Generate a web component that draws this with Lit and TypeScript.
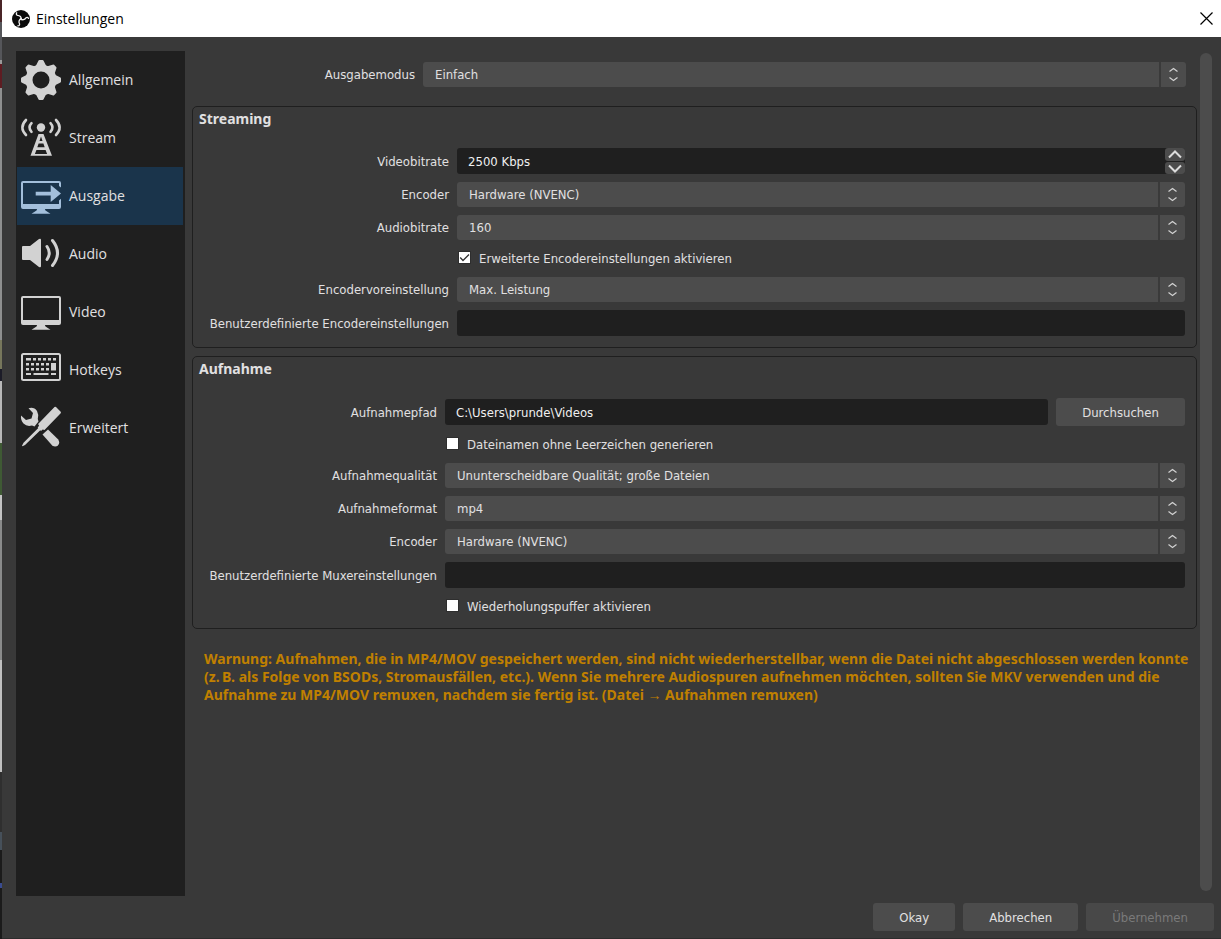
import { LitElement, html, css, svg, nothing } from "lit";
import { customElement, property, state } from "lit/decorators.js";
import { classMap } from "lit/directives/class-map.js";

const formText = css`
  font-family: "DejaVu Sans Condensed", "Noto Sans", sans-serif;
  font-size: 13px;
  line-height: 17px;
`;

const teeth = [0, 45, 90, 135, 180, 225, 270, 315];

const monitorStand = svg`<path d="M16.5 32h7l1 2.5 5 3.2h-19l5-3.2z" fill="currentColor"/>`;

const icons: Record<string, unknown> = {
  gear: svg`
    <circle cx="20" cy="20" r="12" fill="none" stroke="currentColor" stroke-width="7"/>
    ${teeth.map(
      (a) => svg`<path d="M14.5 6.5L17.3 1Q17.6 0 18.5 0h3Q22.4 0 22.7 1l2.8 5.5z"
        fill="currentColor" transform="rotate(${a} 20 20)"/>`
    )}`,
  antenna: svg`
    <g fill="none" stroke="currentColor" stroke-width="2.6" stroke-linecap="round">
      <path d="M5 2Q-2.200 9.500 5 17M35 2q7.200 7.500 0 15"/>
      <path d="M10.500 5.200q-4 4.300 0 8.600M29.500 5.200q4 4.300 0 8.600"/>
    </g>
    <circle cx="20" cy="9.500" r="4.200" fill="currentColor"/>
    <path fill="currentColor" fill-rule="evenodd"
      d="M17.500 16h5l8.500 21.700H9.500zM20 18.500l-1.500 4.500h3zM17.600 25.500l-1.300 3.700h7.400l-1.300-3.700zM15.400 32l-1.500 4h12.200l-1.500-4z"/>`,
  output: svg`
    <path fill="currentColor" fill-rule="evenodd"
      d="M2 5h36q2 0 2 2v4.500l-2-1.500V7H2v21h36v-3.500l2-1.700V31q0 2-2 2H2q-2 0-2-2V7q0-2 2-2z"/>
    ${monitorStand}
    <path fill="currentColor" d="M14.700 15.700h15V9L40 17.500 29.700 26v-6.500h-15z"/>`,
  speaker: svg`
    <path fill="currentColor" d="M2 12h7l9-7q2-1 2 1v26q0 2-2 1l-9-7H2q-1 0-1-1V13q0-1 1-1z"/>
    <g fill="none" stroke="currentColor" stroke-width="3" stroke-linecap="round">
      <path d="M26 12.500q4.500 6.500 0 13"/>
      <path d="M31.500 6.500q10 12.500 0 25"/>
    </g>`,
  monitor: svg`
    <path fill="currentColor" fill-rule="evenodd"
      d="M2 4h36q2 0 2 2v25q0 2-2 2H2q-2 0-2-2V6q0-2 2-2zM2 6v22h36V6z"/>
    ${monitorStand}`,
  keyboard: svg`
    <rect x="1" y="4" width="38" height="26" rx="1.500" fill="none" stroke="currentColor" stroke-width="2"/>
    <g fill="currentColor">
      <path d="M5 8h5v2.500H5zM12 8h3v2.500h-3zM17 8h3v2.500h-3zM22 8h3v2.500h-3zM27 8h3v2.500h-3zM32 8h3v2.500h-3z"/>
      <path d="M5 13h3v2.600H5zM10 13h3v2.600h-3zM15 13h3v2.600h-3zM20 13h3v2.600h-3zM25 13h3v2.600h-3z"/>
      <path d="M5 18h3v2.600H5zM10 18h3v2.600h-3zM15 18h3v2.600h-3zM20 18h3v2.600h-3zM25 18h3v2.600h-3z"/>
      <path d="M30 13h5v7.600h-5zM5 23h5v2H5zM12.500 23h15v2h-15zM30 23h5v2h-5z"/>
    </g>`,
  tools: svg`
    <g fill="currentColor">
      <path d="M33.500-1Q34.300-1.500 35-1l4.700 4.700q.5.800 0 1.500L23.500 22l-1.800-.5-1.700 1.500-.7-.7L4 37l-2.500 1.300-.5-.5 1.500-3L17.300 20.100l-.7-.7 1.500-1.700-1-1.600z"/>
      <path d="M0 7.500l5 4.500 5.500-1.500L12 5 7.500.2Q13-1.500 16 3q2 3.500.8 8L17.500 13.500l-4 5-2.500-1Q6 19 2.500 15.500-.5 12 0 7.500z"/>
      <path d="M27 21.500l10 9.800q2.500 3.500 0 6t-6 0L21.500 26.500z"/>
    </g>`,
};

/** Rows line up on one label column and one control column. */
const rowStyles = css`
  .row {
    display: grid;
    grid-template-columns: var(--label-width) minmax(0, 1fr);
    column-gap: 8px;
    align-items: center;
  }
  .row > label:first-child {
    text-align: right;
    white-space: nowrap;
  }
`;

@customElement("nav-icon")
class NavIcon extends LitElement {
  static styles = css`
    :host { display: block; width: 40px; height: 40px; }
    svg { display: block; overflow: visible; }
  `;
  @property() name = "gear";
  render() {
    return html`<svg width="40" height="40" viewBox="0 0 40 40" aria-hidden="true">${icons[this.name]}</svg>`;
  }
}

@customElement("select-row")
class SelectRow extends LitElement {
  static styles = [
    rowStyles,
    css`
      :host { display: block; }
      .box { display: grid; }
      .box > * { grid-area: 1 / 1; }
      select {
        appearance: none;
        box-sizing: border-box;
        width: 100%;
        height: 25px;
        margin: 0;
        border: 0;
        border-radius: 3px;
        padding: 0 30px 0 12px;
        background: #4c4c4c;
        color: #e1e0e1;
        ${formText}
      }
      .steps {
        justify-self: end;
        display: grid;
        place-items: center;
        width: 25px;
        height: 25px;
        border-left: 2px solid #3a3a3a;
        pointer-events: none;
      }
    `,
  ];
  @property() label = "";
  @property() value = "";
  render() {
    return html`<div class="row">
      <label for="field">${this.label}</label>
      <div class="box">
        <select id="field"><option>${this.value}</option></select>
        <span class="steps">
          <svg width="9" height="15" viewBox="0 0 9 15" fill="none" stroke="#d2d2d2" stroke-width="1.200" aria-hidden="true">
            <path d="M.5 4.500l4-3 4 3M.5 10.500l4 3 4-3"/>
          </svg>
        </span>
      </div>
    </div>`;
  }
}

@customElement("text-row")
class TextRow extends LitElement {
  static styles = [
    rowStyles,
    css`
      :host { display: block; }
      .line { display: flex; align-items: center; gap: 8px; }
      .field { flex: 1; display: flex; min-width: 0; border-radius: 3px; background: #1f1f1f; }
      input {
        flex: 1;
        min-width: 0;
        box-sizing: border-box;
        height: 26px;
        margin: 0;
        border: 0;
        padding: 0 11px;
        background: none;
        color: #f0f0f0;
        ${formText}
      }
      .spin { display: grid; grid-template-rows: 13px 12px; gap: 1px; width: 20px; }
      .spin button {
        display: grid;
        place-items: center;
        border: 0;
        border-radius: 3px;
        padding: 0;
        background: #4c4c4c;
      }
      .browse {
        width: 129px;
        height: 28px;
        border: 0;
        border-radius: 3px;
        padding: 0;
        background: #4c4c4c;
        color: #e1e0e1;
        ${formText}
      }
    `,
  ];
  @property() label = "";
  @property() value = "";
  @property() action = "";
  @property({ type: Boolean }) stepper = false;
  render() {
    const arrow = (name: string, d: string) => html`<button type="button" aria-label=${name}>
      <svg width="14" height="9" viewBox="0 0 14 9" fill="none" stroke="#dcdcdc" stroke-width="2" aria-hidden="true"><path d=${d}/></svg>
    </button>`;
    return html`<div class="row">
      <label for="field">${this.label}</label>
      <div class="line">
        <div class="field">
          <input id="field" type="text" .value=${this.value} />
          ${this.stepper
            ? html`<div class="spin">${arrow("Erhöhen", "M1 7.500l6-6 6 6")}${arrow("Verringern", "M1 1.500l6 6 6-6")}</div>`
            : nothing}
        </div>
        ${this.action ? html`<button class="browse" type="button">${this.action}</button>` : nothing}
      </div>
    </div>`;
  }
}

@customElement("check-row")
class CheckRow extends LitElement {
  static styles = [
    rowStyles,
    css`
      :host { display: block; }
      .check {
        grid-column: 2;
        display: flex;
        align-items: center;
        gap: 8px;
        height: 21px;
      }
      .mark { display: grid; margin: 0 0 2px 1px; }
      .mark > * { grid-area: 1 / 1; }
      input {
        appearance: none;
        box-sizing: border-box;
        width: 13px;
        height: 13px;
        margin: 0;
        border: 1px solid #2e2e2e;
        background: #fff;
      }
      svg { place-self: center; pointer-events: none; }
    `,
  ];
  @property() label = "";
  @property({ type: Boolean }) checked = false;
  render() {
    return html`<div class="row">
      <div class="check">
        <span class="mark">
          <input id="field" type="checkbox" .checked=${this.checked}
            @change=${(e: Event) => (this.checked = (e.target as HTMLInputElement).checked)} />
          ${this.checked
            ? html`<svg width="11" height="11" viewBox="0 0 11 11" fill="none" stroke="#333" stroke-width="1.300" aria-hidden="true"><path d="M1.200 5.500L4 8.500l6-6"/></svg>`
            : nothing}
        </span>
        <label for="field">${this.label}</label>
      </div>
    </div>`;
  }
}

const pages = [
  ["gear", "Allgemein"],
  ["antenna", "Stream"],
  ["output", "Ausgabe"],
  ["speaker", "Audio"],
  ["monitor", "Video"],
  ["keyboard", "Hotkeys"],
  ["tools", "Erweitert"],
];

@customElement("app-root")
class AppRoot extends LitElement {
  static styles = css`
    :host {
      display: grid;
      grid-template-columns: 2px minmax(0, 1fr);
      min-height: 100vh;
      color: #e1e0e1;
      ${formText}
    }
    .desktop {
      background: linear-gradient(
        #4a2528 0 22px, #55565a 22px 60px, #9a9a9a 60px 64px, #5e1c22 64px 88px,
        #8f9090 88px 340px, #77775c 340px 369px, #1c1c28 369px 381px, #b9b9b9 381px 443px,
        #3f5a34 443px 495px, #c4c4c4 495px 520px, #8a8b8b 520px 660px, #c0c0c0 660px 772px,
        #2f2f2f 772px 832px, #46505a 832px 850px, #1b1b1b 850px 883px, #3a4c90 883px 888px, #1b1b1b 888px
      );
    }
    .window {
      display: flex;
      flex-direction: column;
      box-sizing: border-box;
      border-bottom: 1px solid #2c2c2c;
      background: #393939;
    }
    .titlebar {
      display: flex;
      align-items: center;
      gap: 6px;
      height: 37px;
      padding: 0 7px 0 10px;
      background: #fff;
      color: #000;
    }
    .titlebar h1 {
      flex: 1;
      margin: 0;
      font: 14px/20px "Open Sans", sans-serif;
    }
    .close {
      display: grid;
      place-items: center;
      width: 16px;
      height: 16px;
      border: 0;
      padding: 0;
      background: none;
    }
    .body {
      flex: 1;
      display: grid;
      grid-template-columns: 169px minmax(0, 1fr) 12px;
      padding: 14px 9px 0 14px;
    }
    .nav {
      background: #1f1f1f;
      padding: 0 2px 0 1px;
    }
    .nav ul { margin: 0; padding: 0; list-style: none; }
    .nav a {
      display: flex;
      align-items: center;
      gap: 8px;
      height: 58px;
      padding-left: 4px;
      color: #e1e0e1;
      text-decoration: none;
      font: 14px/20px "Open Sans", sans-serif;
    }
    .nav nav-icon { color: #d2d2d2; }
    .nav .current { background: #1a344b; }
    .nav .current nav-icon { color: #a3bfdb; }
    .content {
      display: flex;
      flex-direction: column;
      padding: 11px 3px 0 7px;
    }
    .mode {
      --label-width: 211px;
      padding: 0 11px 0 12px;
      margin-bottom: 19px;
    }
    .group {
      border: 1px solid #1f1f1f;
      border-radius: 5px;
      padding: 3px 6px 11px;
      margin-bottom: 8px;
    }
    .group h2 {
      margin: 0 0 20px;
      font: bold 14px/18px "Noto Sans", sans-serif;
    }
    .fields { display: grid; gap: 8px; padding: 0 5px; }
    .streaming { --label-width: 245px; }
    .recording { --label-width: 233px; }
    .warning {
      margin: 13px 0 0 12px;
      color: #c08000;
      font: bold 14px/18px "Noto Sans", sans-serif;
    }
    .scrollbar {
      border-radius: 6px;
      margin: 2px 0 5px;
      background: #4c4c4c;
    }
    .buttons {
      display: flex;
      justify-content: flex-end;
      gap: 8px;
      padding: 7px 7px 7px 0;
    }
    .buttons button {
      height: 28px;
      border: 0;
      border-radius: 3px;
      padding: 0 26px;
      background: #4c4c4c;
      color: #e1e0e1;
      ${formText}
    }
    .buttons button:disabled { background: #484848; color: #7a7a7a; }
  `;

  @state() private page = "Ausgabe";

  render() {
    return html`
      <div class="desktop"></div>
      <div class="window">
        <header class="titlebar">
          <svg width="18" height="18" viewBox="0 0 18 18" aria-hidden="true">
            <circle cx="9" cy="9" r="9" fill="#0a0a0a"/>
            ${[0, 120, 240].map(
              (a) => svg`<path d="M9.200 9.500C9.400 7 8 5.400 5.600 5.300 4.300 5 4 3.900 4.700 2.800"
                fill="none" stroke="#f2f2f2" stroke-width="1.300" stroke-linecap="round" transform="rotate(${a} 9 9)"/>`
            )}
          </svg>
          <h1>Einstellungen</h1>
          <button class="close" type="button" aria-label="Schließen">
            <svg width="13" height="13" viewBox="0 0 13 13" stroke="#000" stroke-width="1.200" aria-hidden="true"><path d="M.5.5l12 12M12.500.5l-12 12"/></svg>
          </button>
        </header>
        <main class="body">
          <nav class="nav">
            <ul>
              ${pages.map(
                ([icon, name]) => html`<li>
                  <a href="#${name}" class=${classMap({ current: name === this.page })} @click=${() => (this.page = name)}>
                    <nav-icon name=${icon}></nav-icon>${name}
                  </a>
                </li>`
              )}
            </ul>
          </nav>
          <div class="content">
            <select-row class="mode" label="Ausgabemodus" value="Einfach"></select-row>
            <section class="group streaming">
              <h2>Streaming</h2>
              <div class="fields">
                <text-row label="Videobitrate" value="2500 Kbps" stepper></text-row>
                <select-row label="Encoder" value="Hardware (NVENC)"></select-row>
                <select-row label="Audiobitrate" value="160"></select-row>
                <check-row label="Erweiterte Encodereinstellungen aktivieren" checked></check-row>
                <select-row label="Encodervoreinstellung" value="Max. Leistung"></select-row>
                <text-row label="Benutzerdefinierte Encodereinstellungen"></text-row>
              </div>
            </section>
            <section class="group recording">
              <h2>Aufnahme</h2>
              <div class="fields">
                <text-row label="Aufnahmepfad" value="C:\\Users\\prunde\\Videos" action="Durchsuchen"></text-row>
                <check-row label="Dateinamen ohne Leerzeichen generieren"></check-row>
                <select-row label="Aufnahmequalität" value="Ununterscheidbare Qualität; große Dateien"></select-row>
                <select-row label="Aufnahmeformat" value="mp4"></select-row>
                <select-row label="Encoder" value="Hardware (NVENC)"></select-row>
                <text-row label="Benutzerdefinierte Muxereinstellungen"></text-row>
                <check-row label="Wiederholungspuffer aktivieren"></check-row>
              </div>
            </section>
            <p class="warning">
              Warnung: Aufnahmen, die in MP4/MOV gespeichert werden, sind nicht wiederherstellbar, wenn die Datei nicht
              abgeschlossen werden konnte (z.&#8239;B. als Folge von BSODs, Stromausfällen, etc.). Wenn Sie mehrere
              Audiospuren aufnehmen möchten, sollten Sie MKV verwenden und die Aufnahme zu MP4/MOV remuxen, nachdem sie
              fertig ist. (Datei → Aufnahmen remuxen)
            </p>
          </div>
          <div class="scrollbar"></div>
        </main>
        <footer class="buttons">
          <button type="button">Okay</button>
          <button type="button">Abbrechen</button>
          <button type="button" disabled>Übernehmen</button>
        </footer>
      </div>
    `;
  }
}
